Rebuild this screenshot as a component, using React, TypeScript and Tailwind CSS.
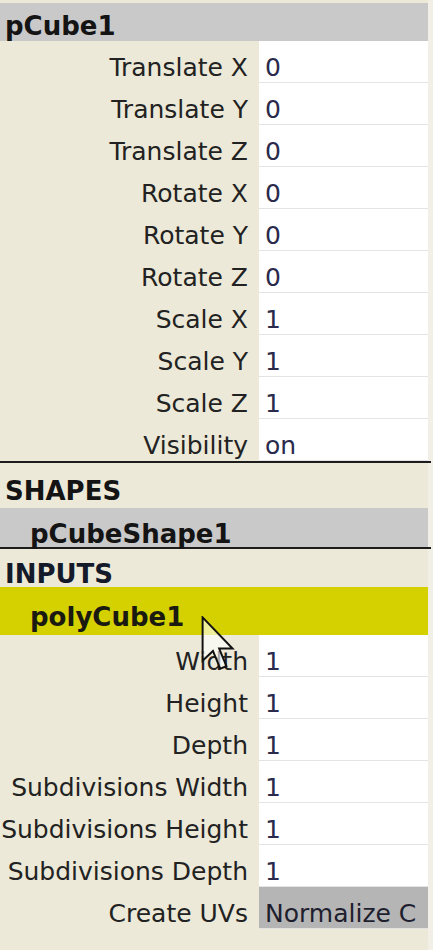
import React from 'react'

const font = { fontFamily: '"DejaVu Sans", Verdana, sans-serif' }

type Attr = { label: string; value: string; muted?: boolean }

const transformAttrs: Attr[] = [
  { label: 'Translate X', value: '0' },
  { label: 'Translate Y', value: '0' },
  { label: 'Translate Z', value: '0' },
  { label: 'Rotate X', value: '0' },
  { label: 'Rotate Y', value: '0' },
  { label: 'Rotate Z', value: '0' },
  { label: 'Scale X', value: '1' },
  { label: 'Scale Y', value: '1' },
  { label: 'Scale Z', value: '1' },
  { label: 'Visibility', value: 'on' },
]

const inputAttrs: Attr[] = [
  { label: 'Width', value: '1' },
  { label: 'Height', value: '1' },
  { label: 'Depth', value: '1' },
  { label: 'Subdivisions Width', value: '1' },
  { label: 'Subdivisions Height', value: '1' },
  { label: 'Subdivisions Depth', value: '1' },
  { label: 'Create UVs', value: 'Normalize C', muted: true },
]

function AttrRow({ label, value, muted }: Attr) {
  return (
    <div className="flex h-[42px] text-[25px] leading-[30px]">
      <div className="w-[259px] shrink-0 pr-[11px] pt-[12px] text-right text-[#222222] whitespace-nowrap">
        {label}
      </div>
      <div
        className={
          muted
            ? 'flex-1 bg-[#b5b5b5] pl-[6px] pt-[12px] text-[#1e1e2e] whitespace-nowrap overflow-hidden border-b border-[#e2e2e2]'
            : 'flex-1 bg-white pl-[6px] pt-[12px] text-[#2a2a4c] whitespace-nowrap overflow-hidden border-b border-[#e4e4e4]'
        }
      >
        {value}
      </div>
    </div>
  )
}

export default function App() {
  return (
    <div className="relative w-[433px] h-[950px] bg-[#f1efe6] overflow-hidden" style={font}>
      <div className="w-[428px] pt-[3px] bg-[#ece9d8] h-[950px]">
        {/* transform node */}
        <div className="h-[38px] bg-[#c9c9c9] pl-[5px] pt-[8px] text-[26px] leading-[30px] font-bold text-[#141414]">
          pCube1
        </div>
        {transformAttrs.map((a) => (
          <AttrRow key={a.label} {...a} />
        ))}
        <div className="h-[2px] w-[431px] bg-[#1c1c1c]" />

        {/* shapes */}
        <div className="h-[45px] pl-[5px] pt-[13px] text-[26px] leading-[30px] font-bold text-[#141414]">SHAPES</div>
        <div className="h-[39px] bg-[#c9c9c9] pl-[30px] pt-[11px] text-[26px] leading-[30px] font-bold text-[#141414]">
          pCubeShape1
        </div>
        <div className="h-[2px] w-[431px] bg-[#1c1c1c]" />

        {/* inputs */}
        <div className="h-[38px] pl-[5px] pt-[10px] text-[26px] leading-[30px] font-bold text-[#141a2a]">INPUTS</div>
        <div className="h-[48px] bg-[#d5d100] pl-[30px] pt-[15px] text-[26px] leading-[30px] font-bold text-[#1a1a10]">
          polyCube1
        </div>
        {inputAttrs.map((a) => (
          <AttrRow key={a.label} {...a} />
        ))}
      </div>

      {/* mouse cursor */}
      <svg
        className="absolute left-[201px] top-[616px]"
        width="34"
        height="56"
        viewBox="0 0 12 20"
      >
        <path
          d="M0.5 0.5 L0.5 16 L4.2 12.5 L6.8 18.8 L9 17.9 L6.4 11.6 L11.2 11.6 Z"
          fill="white"
          fillOpacity="0.6"
          stroke="#111111"
          strokeWidth="0.7"
          strokeLinejoin="miter"
        />
      </svg>
    </div>
  )
}
